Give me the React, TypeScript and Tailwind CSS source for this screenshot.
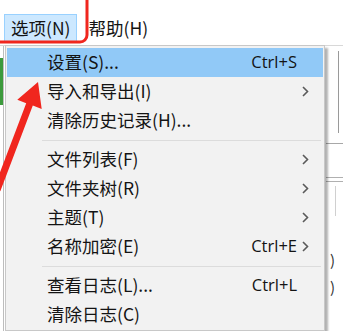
import React from "react"

type Item = {
  label: string
  shortcut?: string
  submenu?: boolean
  active?: boolean
}

const groups: Item[][] = [
  [
    { label: "设置(S)...", shortcut: "Ctrl+S", active: true },
    { label: "导入和导出(I)", submenu: true },
    { label: "清除历史记录(H)..." },
  ],
  [
    { label: "文件列表(F)", submenu: true },
    { label: "文件夹树(R)", submenu: true },
    { label: "主题(T)", submenu: true },
    { label: "名称加密(E)", shortcut: "Ctrl+E", submenu: true },
  ],
  [
    { label: "查看日志(L)...", shortcut: "Ctrl+L" },
    { label: "清除日志(C)" },
  ],
]

function Chevron() {
  return (
    <svg width="7" height="11" viewBox="0 0 7 11">
      <path d="M1 1 L5.5 5.5 L1 10" fill="none" stroke="#5a5a5a" strokeWidth="1.6" />
    </svg>
  )
}

function MenuRow({ item }: { item: Item }) {
  return (
    <div
      className={`mx-px flex h-[29px] items-center pl-[40px] ${
        item.active ? "bg-[#91c9f7]" : ""
      }`}
    >
      <span className="flex-1 text-[17.5px] text-[#141414]">{item.label}</span>
      {item.shortcut && (
        <span className="font-['Open_Sans',sans-serif] text-[16.5px] text-[#141414]">
          {item.shortcut}
        </span>
      )}
      <span className="flex w-[26px] items-center pl-[5px]">
        {item.submenu && <Chevron />}
      </span>
    </div>
  )
}

export default function App() {
  return (
    <div className="relative h-[331px] w-[343px] overflow-hidden bg-white font-['Noto_Sans_CJK_SC',sans-serif]">
      <div className="flex h-[46px] items-end border-b border-[#d8d8d8] pb-[2px] pl-[4px]">
        <div className="flex h-[29px] items-center border border-[#99d1ff] bg-[#cce8ff] px-[6px] text-[17.5px] text-[#141414]">
          选项(N)
        </div>
        <div className="flex h-[29px] items-center pl-[11px] text-[17.5px] text-[#141414]">
          帮助(H)
        </div>
      </div>

      <div className="flex h-[285px]">
        <div className="flex w-[4px] flex-col border-r border-[#bdbdbd] pt-[12px]">
          <div className="h-[47px] bg-[#3c9a3c]" />
        </div>
        <div className="flex flex-1 justify-end">
          <div className="flex w-[17px] flex-col pt-[5px]">
            <div className="ml-[12px] h-[82px] w-px bg-[#9a9a9a]" />
            <div className="mt-[10px] h-px bg-[#a8a8a8]" />
            <div className="mt-[33px] h-px bg-[#b0b0b0]" />
            <div className="mt-[3px] h-px bg-[#b0b0b0]" />
            <div className="ml-[9px] mt-[4px] h-[30px] w-px bg-[#d0d0d0]" />
            <div className="ml-[4px] mt-[36px] text-[15px] leading-none text-[#333]">)</div>
            <div className="ml-[4px] mt-[12px] text-[15px] leading-none text-[#333]">)</div>
          </div>
        </div>
      </div>

      <div className="absolute left-[5px] top-[45px] w-[320px] border border-[#c8c8c8] bg-[#f2f2f2] pb-[1px] pt-[2px] shadow-[3px_3px_2px_rgba(0,0,0,0.3)]">
        {groups.map((group, gi) => (
          <div key={gi}>
            {gi > 0 && (
              <div className="flex h-[10px] items-center pl-[36px] pr-[3px]">
                <div className="h-px flex-1 bg-[#dcdcdc]" />
              </div>
            )}
            {group.map((item) => (
              <MenuRow key={item.label} item={item} />
            ))}
          </div>
        ))}
      </div>

      <svg
        className="pointer-events-none absolute left-0 top-0"
        width="343"
        height="331"
        viewBox="0 0 343 331"
      >
        <rect x="-10" y="-8" width="97" height="50" rx="7" fill="none" stroke="#f0261e" strokeWidth="3" />
        <polygon
          points="38,82 41.7,109 32.8,105.6 0.3,191.2 -6.3,188.8 26.2,103.2 17.3,99.8"
          fill="#f0261e"
        />
      </svg>
    </div>
  )
}
